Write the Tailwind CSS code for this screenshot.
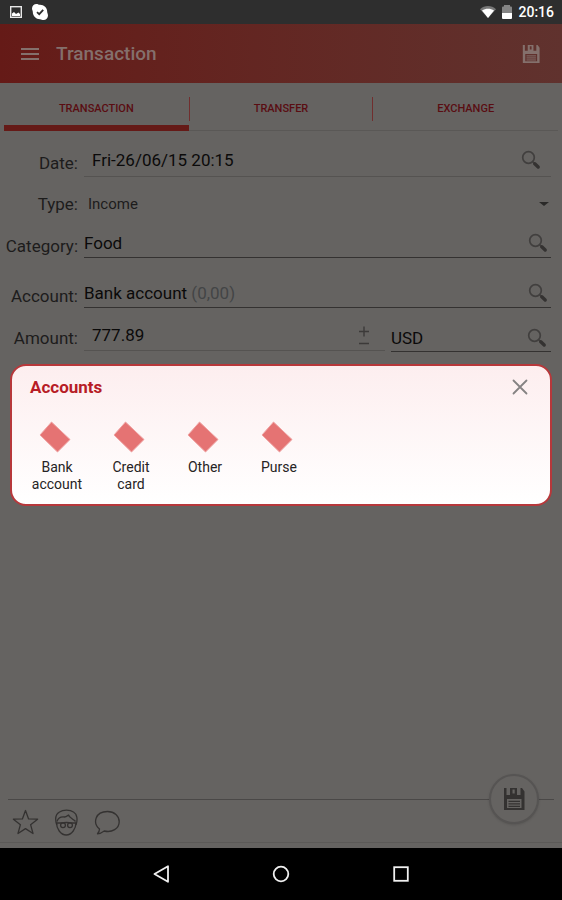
<!DOCTYPE html>
<html lang="en">
<head>
    <meta charset="UTF-8">
    <meta name="viewport" content="width=device-width, initial-scale=1.0">
    <title>Transaction</title>
    <script src="https://cdn.jsdelivr.net/npm/@tailwindcss/browser@4"></script>
</head>
<body class="bg-[#656361] font-[Roboto,sans-serif] text-[#1d1c1c]">
<!-- shared icons -->
<svg class="hidden">
    <symbol id="search" viewBox="0 0 20 20">
        <circle cx="7.5" cy="7.5" r="5.8" fill="none" stroke="#413f3e" stroke-width="1.7"/>
        <path d="M11.8 11.8l2 2" stroke="#413f3e" stroke-width="1.8"/>
        <path d="M13.8 13.8l3.400 3.200" stroke="#343231" stroke-width="3.4" stroke-linecap="round"/>
    </symbol>
    <symbol id="save" viewBox="0 0 22 22">
        <path fill="currentColor" fill-rule="evenodd" d="M1 0h2.500v7H17.500V0H19l2.500 3.500V22H1zM4 11v9h14.500v-9z"/>
        <path fill="currentColor" fill-rule="evenodd" d="M7 0h7v7.500H7zM9.500 1.500v4h2.200v-4z"/>
        <path stroke="currentColor" stroke-width="1.200" d="M5.500 13.300h11.500M5.500 15.800h11.500M5.500 18.300h11.500"/>
    </symbol>
    <symbol id="tile" viewBox="0 0 32 32">
        <path d="M12.500 1L1 14l17.500 17L31 18.500z" fill="#e57373" stroke="#efa3a3" stroke-width="1"/>
    </symbol>
</svg>

<div class="relative min-h-screen flex flex-col">
    <!-- status bar -->
    <div class="h-6 bg-[#2e2e2e] flex items-center pl-2.5 pr-2 text-white">
        <svg class="w-3 h-3" viewBox="0 0 12 12">
            <rect x=".7" y=".7" width="10.600" height="10.600" fill="none" stroke="#e8e8e8" stroke-width="1.400"/>
            <path d="M2 10V7.500L4 6l2 2 2.500-1.500L10 8v2z" fill="#fff"/>
        </svg>
        <svg class="w-4 h-4 ml-2.5" viewBox="0 0 16 16">
            <path fill="#fff" d="M4.500 0C6 0 6.500.8 8 .8c4 0 7.200 3 7.200 7 0 1.500.8 2.200.8 3.700C16 14 14 16 11.500 16c-1.500 0-2-.8-3.500-.8-4 0-7.200-3.200-7.200-7.200C.8 6.500 0 6 0 4.500 0 2 2 0 4.500 0z"/>
            <path d="M5 8.200l2.200 2 4-4.400" fill="none" stroke="#2e2e2e" stroke-width="1.800"/>
        </svg>
        <svg class="w-4 h-3 ml-auto" viewBox="0 0 16 12">
            <path d="M0 3.200C4.500-1 11.500-1 16 3.200L8 12z" fill="#777"/>
            <path d="M2 4.600c3.500-2.600 8.500-2.600 12 0L8 12z" fill="#fff"/>
        </svg>
        <svg class="w-2.5 h-3.5 ml-1.5 mr-1.5" viewBox="0 0 10 14">
            <path d="M2 0h6v1.500h1q1 0 1 1V8H0V2.500q0-1 1-1h1z" fill="#858585"/>
            <path d="M0 8h10v5q0 1-1 1H1q-1 0-1-1z" fill="#fff"/>
        </svg>
        <span class="text-sm font-medium">20:16</span>
    </div>

    <!-- header -->
    <header class="h-[59px] flex items-center pl-5 pr-[22px] bg-linear-to-r from-[#651a17] to-[#60322e] text-[#84706c]">
        <button aria-label="Menu" class="w-5">
            <svg class="w-5 h-3.5" viewBox="0 0 20 14"><path d="M1 2h18M1 7h18M1 12h18" stroke="currentColor" stroke-width="2"/></svg>
        </button>
        <h1 class="ml-4 pt-0.5 text-[19px] font-medium flex-1">Transaction</h1>
        <button aria-label="Save">
            <svg class="w-[18px] h-[18px]"><use href="#save"/></svg>
        </button>
    </header>

    <!-- tabs -->
    <nav class="h-12 mx-1 grid grid-cols-3 border-b border-[#5a5856] text-[11px] font-medium text-[#5a0d12]">
        <button class="-mb-px border-b-[6px] border-[#651a17] pt-2.5">TRANSACTION</button>
        <button class="relative pt-1.5">TRANSFER
            <span class="absolute left-0 top-3.5 h-6 w-px bg-[#712e2e]"></span>
            <span class="absolute right-0 top-3.5 h-6 w-px bg-[#712e2e]"></span>
        </button>
        <button class="pt-1.5">EXCHANGE</button>
    </nav>

    <!-- form -->
    <main class="flex-1 pt-3.5 pr-[11px] text-[17px] leading-6">
        <div class="flex gap-1.5">
            <label for="date" class="w-[78px] text-right pt-1.5">Date:</label>
            <div class="flex-1 h-8 flex items-center border-b border-[#555351] pb-0.5 pl-2 pr-2.5">
                <input id="date" type="text" value="Fri-26/06/15 20:15" class="flex-1 min-w-0 text-[#0b0a0a] outline-none">
                <button aria-label="Pick date"><svg class="w-5 h-5"><use href="#search"/></svg></button>
            </div>
        </div>
        <div class="flex gap-1.5 items-center mt-[15px]">
            <label for="type" class="w-[78px] text-right">Type:</label>
            <div class="flex-1 flex items-center pr-0.5">
                <select id="type" class="flex-1 appearance-none pl-1 text-[15px] outline-none">
                    <option>Income</option>
                    <option>Expense</option>
                </select>
                <svg class="w-2.5 h-1" viewBox="0 0 10 4"><path d="M0 0h10L5 4z" fill="#2a2928"/></svg>
            </div>
        </div>
        <div class="flex gap-1.5 mt-3">
            <label for="category" class="w-[78px] text-right pt-1.5">Category:</label>
            <div class="flex-1 h-[30px] flex items-center border-b border-[#343231] pr-[3px]">
                <input id="category" type="text" value="Food" class="flex-1 min-w-0 text-[#0b0a0a] outline-none">
                <button aria-label="Pick category"><svg class="w-5 h-5"><use href="#search"/></svg></button>
            </div>
        </div>
        <div class="flex gap-1.5 mt-5">
            <label for="account" class="w-[78px] text-right pt-1.5">Account:</label>
            <button id="account" class="flex-1 h-[30px] flex items-center justify-between border-b border-[#343231] pr-[3px] text-[#0b0a0a]">
                <span>Bank account <span class="text-[#434546]">(0,00)</span></span>
                <svg class="w-5 h-5"><use href="#search"/></svg>
            </button>
        </div>
        <div class="flex gap-1.5 mt-3">
            <label for="amount" class="w-[78px] text-right pt-1.5">Amount:</label>
            <div class="flex-1 h-[31px] flex items-center border-b border-[#555351] pl-2 pr-4">
                <input id="amount" type="text" value="777.89" class="flex-1 min-w-0 text-[#0b0a0a] outline-none">
                <button aria-label="Change sign">
                    <svg class="w-2.5 h-5" viewBox="0 0 10 20"><path d="M0 6.500h10M5 1.500v10M0 18.500h10" stroke="#3c3a39" stroke-width="1.400"/></svg>
                </button>
            </div>
            <div class="w-40 h-8 pt-1 flex items-center border-b border-[#343231] pr-1">
                <input type="text" value="USD" aria-label="Currency" class="flex-1 min-w-0 text-[#0b0a0a] outline-none">
                <button aria-label="Pick currency"><svg class="w-5 h-5"><use href="#search"/></svg></button>
            </div>
        </div>
    </main>

    <!-- bottom toolbar -->
    <footer class="relative h-[49px] mx-2 pb-1 flex items-center gap-3.5 pl-1 border-t border-[#4a4847] text-[#343231]">
        <button aria-label="Favourite">
            <svg class="w-[27px] h-[27px]" viewBox="0 0 27 27" fill="none" stroke="currentColor" stroke-width="1.300" stroke-linejoin="round">
                <path d="M13.500 1.500l3.100 8.400 9 .3-7 5.500 2.400 8.800-7.500-4.900L6 24.500l2.400-8.800-7-5.500 9-.3z"/>
            </svg>
        </button>
        <button aria-label="Payee">
            <svg class="w-[27px] h-[27px]" viewBox="0 0 27 27" fill="none" stroke="currentColor" stroke-width="1.300" stroke-linejoin="round">
                <path d="M3.800 16C1.800 10 3 5 6.500 3 10 .5 17 .5 20.500 3c3.500 2 4.500 7.500 2.500 13"/>
                <path d="M3.500 13.500c0 6 4 12.500 9.700 12.500S23 19.500 23 13.500"/>
                <path d="M4 12.500c1-3 4-5 7.500-4.500 1.500 0 3-1.300 4-2 .8 3 5.500 4.500 7 6.500"/>
                <path d="M3.500 14h4.500q5.500-1 11 0h4.500"/>
                <circle cx="10" cy="16.300" r="2.400"/>
                <circle cx="17" cy="16.300" r="2.400"/>
            </svg>
        </button>
        <button aria-label="Comment">
            <svg class="w-[27px] h-[27px]" viewBox="0 0 27 27" fill="none" stroke="currentColor" stroke-width="1.300" stroke-linejoin="round">
                <path d="M5.500 20C-1.500 14 1 2.500 13.500 2.500c7 0 11.700 4.500 11.700 10.200 0 6.800-7.200 11.300-15 9.300-2 1.500-4 2.600-6.700 2.800 1.300-1.500 2-3.300 2-4.800z"/>
            </svg>
        </button>
        <button aria-label="Save transaction" class="absolute right-[15px] -top-[26px] w-[50px] h-[50px] rounded-full border-2 border-[#565453] bg-[#656361] shadow-sm flex items-center justify-center text-[#343231]">
            <svg class="w-[22px] h-[22px]"><use href="#save"/></svg>
        </button>
        <span class="absolute -inset-x-2 bottom-[5px] h-px bg-[#5b5957]"></span>
    </footer>

    <!-- system navigation -->
    <div class="h-[52px] bg-black flex items-center justify-center gap-[102px]">
        <button aria-label="Back">
            <svg class="w-[18px] h-[18px]" viewBox="0 0 18 18"><path d="M16 1.200v15.600L2.500 9z" fill="none" stroke="#f0f0f0" stroke-width="1.800" stroke-linejoin="round"/></svg>
        </button>
        <button aria-label="Home">
            <svg class="w-[18px] h-[18px]" viewBox="0 0 18 18"><circle cx="9" cy="9" r="7.300" fill="none" stroke="#f0f0f0" stroke-width="1.800"/></svg>
        </button>
        <button aria-label="Recent apps">
            <svg class="w-[18px] h-[18px]" viewBox="0 0 18 18"><rect x="2.200" y="2.200" width="13.600" height="13.600" fill="none" stroke="#f0f0f0" stroke-width="1.800"/></svg>
        </button>
    </div>

    <!-- accounts popup -->
    <div role="dialog" aria-labelledby="popup-title" class="absolute inset-x-2.5 top-[364px] h-[142px] rounded-2xl border-2 border-[#b7383b] bg-linear-to-b from-[#fdeeef] to-white px-2">
        <div class="flex items-center justify-between pt-[9px] pl-2.5 pr-3.5">
            <h2 id="popup-title" class="text-[17px] leading-6 font-bold text-[#b71c26]">Accounts</h2>
            <button aria-label="Close">
                <svg class="w-4 h-4" viewBox="0 0 16 16"><path d="M1.500 1.500l13 13M14.500 1.500l-13 13" stroke="#858283" stroke-width="1.800" stroke-linecap="round"/></svg>
            </button>
        </div>
        <div class="flex mt-[22px] text-sm leading-[17px] text-[#262324]">
            <button class="w-[74px] flex flex-col items-center">
                <svg class="w-8 h-8 mr-1"><use href="#tile"/></svg>
                <span class="mt-1.5">Bank<br>account</span>
            </button>
            <button class="w-[74px] flex flex-col items-center">
                <svg class="w-8 h-8 mr-1"><use href="#tile"/></svg>
                <span class="mt-1.5">Credit<br>card</span>
            </button>
            <button class="w-[74px] flex flex-col items-center">
                <svg class="w-8 h-8 mr-1"><use href="#tile"/></svg>
                <span class="mt-1.5">Other</span>
            </button>
            <button class="w-[74px] flex flex-col items-center">
                <svg class="w-8 h-8 mr-1"><use href="#tile"/></svg>
                <span class="mt-1.5">Purse</span>
            </button>
        </div>
    </div>
</div>
</body>
</html>
